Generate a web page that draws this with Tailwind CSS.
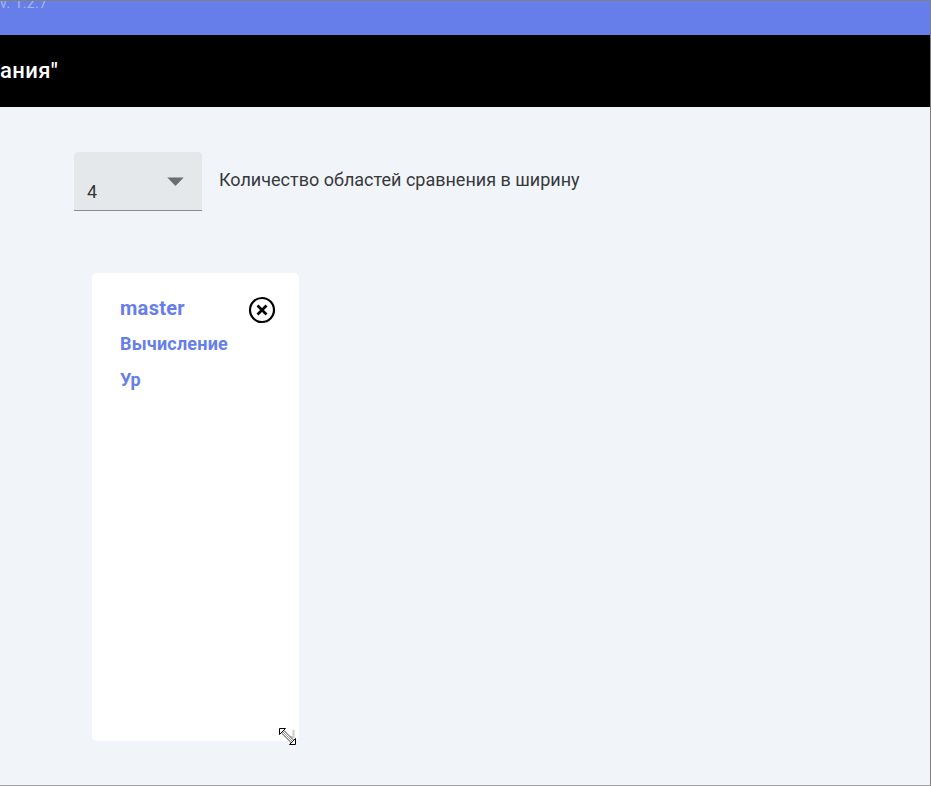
<!DOCTYPE html>
<html lang="ru">
<head>
<meta charset="utf-8">
<title>Сравнение</title>
<script src="https://cdn.jsdelivr.net/npm/@tailwindcss/browser@4"></script>
</head>
<body class="overflow-hidden">
<div class="flex h-[786px] w-[931px] flex-col overflow-hidden border-t border-r border-b border-t-[#808080] border-r-[#808080] border-b-[#a0a0a0] bg-[#f1f5fa] font-[Roboto,sans-serif]">
  <header class="h-[34px] shrink-0 overflow-hidden bg-[#667eea]">
    <div class="-mt-[6px] text-[14px] leading-4 tracking-[0.4px] text-white/45">v. 1.2.7</div>
  </header>
  <div class="flex h-[72px] shrink-0 items-center bg-black">
    <h1 class="text-[22px] leading-none font-medium tracking-[0.4px] text-white">ания"</h1>
  </div>
  <main class="flex flex-col items-start">
    <div class="mt-[45px] ml-[74px] flex items-start">
      <div class="flex h-[59px] w-[128px] justify-between rounded-t border-b border-[#8b8d8f] bg-[#e4e8eb] pl-[13px]">
        <span class="pt-[29px] text-[18px] leading-[22px] text-black/80">4</span>
        <svg class="mt-[25px] mr-[18px] h-[10px] w-[17px]" viewBox="0 0 17 10"><path d="M0.3 0.5h16.4L8.5 9z" fill="#6b6d6f"/></svg>
      </div>
      <span class="ml-[17px] pt-[17px] text-[18px] leading-[22px] whitespace-nowrap text-[#36383a]">Количество областей сравнения в ширину</span>
    </div>
    <section class="relative mt-[62px] ml-[92px] flex h-[468px] w-[207px] items-start justify-between rounded-[5px] bg-white pt-[22px] pr-[23.500px] pl-[28px]">
      <div class="font-bold text-[#667eea]">
        <h2 class="text-[20px] leading-[26px] tracking-[0.3px]">master</h2>
        <p class="mt-[12px] text-[18px] leading-[22px] tracking-[0.2px]">Вычисление</p>
        <p class="mt-[14px] text-[18px] leading-[22px]">Ур</p>
      </div>
      <svg class="mt-[1px] -ml-6 h-[28px] w-[28px] shrink-0" viewBox="0 0 28 28" fill="none" stroke="#000"><circle cx="14" cy="14" r="12" stroke-width="2.2"/><path d="M9.5 9.5l9 9M18.500 9.5l-9 9" stroke-width="2.7"/></svg>
      <svg class="absolute top-[453px] left-[185px] h-[22px] w-[22px]" viewBox="0 0 22 22" fill="none"><path d="M16.500 4v7h-7" stroke="#ccc" stroke-width="2"/><path d="M6 6l10 10" stroke="#444" stroke-width="4"/><path d="M6 6l10 10" stroke="#fff" stroke-width="2.6"/><path d="M6 6l10 10" stroke="#999" stroke-width="1"/><path d="M2.500 2.500h6l-6 6zM18.500 18.500h-6l6-6z" fill="#fff" stroke="#000"/></svg>
    </section>
  </main>
</div>
</body>
</html>
